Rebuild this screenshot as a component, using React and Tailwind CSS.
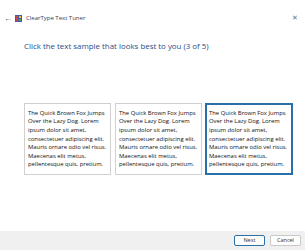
const LINES = [
  "The Quick Brown Fox Jumps",
  "Over the Lazy Dog. Lorem",
  "ipsum dolor sit amet,",
  "consectetuer adipiscing elit.",
  "Mauris ornare odio vel risus.",
  "Maecenas elit metus,",
  "pellentesque quis, pretium.",
];

function Sample() {
  return (
    <>
      {LINES.map((l) => (
        <div key={l} className="whitespace-nowrap">{l}</div>
      ))}
    </>
  );
}

export default function App() {
  return (
    <div className="w-[305px] h-[250px] bg-white flex flex-col relative overflow-hidden" style={{ fontFamily: '"Open Sans", "Noto Sans", sans-serif' }}>
      <div className="h-[35px] flex items-center pl-[4px] pt-[1px]">
        <span className="text-[8px] text-gray-600 w-[10px]">←</span>
        <svg width="7" height="7" viewBox="0 0 7 7" className="ml-[1px]">
          <rect x="0" y="0" width="7" height="7" fill="#4a5aa8" />
          <rect x="1" y="1" width="2" height="5" fill="#d04a3a" />
          <rect x="4" y="1" width="2" height="2" fill="#e8c040" />
          <rect x="4" y="4" width="2" height="2" fill="#4aa050" />
        </svg>
        <span className="ml-[4px] text-[6px] text-gray-700">ClearType Text Tuner</span>
        <span className="absolute right-[7px] top-[13px] text-[7px] text-gray-500">✕</span>
      </div>
      <div className="pl-[24px] pt-[6px] text-[7.9px] text-[#2b4d86]">Click the text sample that looks best to you (3 of 5)</div>
      <div className="flex pl-[24px] gap-[3px] mt-[50px]">
        <div className="w-[87px] h-[72px] border border-[#d0d0d0] px-[3px] pt-[5px] text-[5.9px] leading-[8.6px] text-[#111]"><Sample /></div>
        <div className="w-[87px] h-[72px] border border-[#d0d0d0] px-[3px] pt-[5px] text-[5.9px] leading-[8.6px] text-[#111] ml-[1px]"><Sample /></div>
        <div className="w-[88px] h-[72px] border-2 border-[#2a6fa8] px-[2px] pt-[4px] text-[5.9px] leading-[8.6px] text-[#111]"><Sample /></div>
      </div>
      <div className="mt-auto h-[19px] bg-[#f0f0f0] flex items-center justify-end gap-[5px] pr-[4px]">
        <div className="w-[31px] h-[11px] border border-[#2a6fa8] bg-[#fdfdfd] rounded-[2px] text-[5.5px] flex items-center justify-center text-[#333]">Next</div>
        <div className="w-[31px] h-[11px] border border-[#c8c8c8] bg-[#fdfdfd] rounded-[2px] text-[5.5px] flex items-center justify-center text-[#333]">Cancel</div>
      </div>
    </div>
  );
}
